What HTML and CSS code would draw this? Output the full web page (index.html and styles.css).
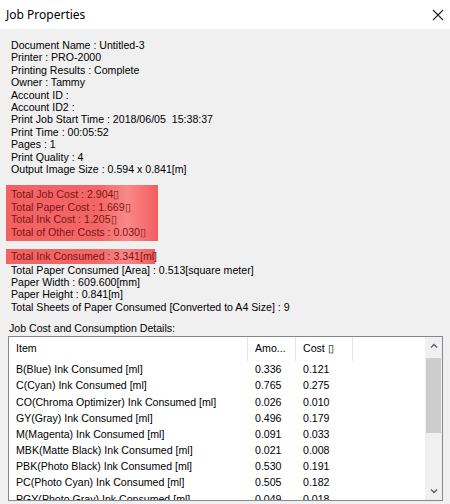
FILE: index.html
```html
<!DOCTYPE html>
<html lang="en">
<head>
    <meta charset="UTF-8">
    <title>Job Properties</title>
    <link rel="stylesheet" href="styles.css">
</head>
<body>
    <div class="window">
        <div class="titlebar">
            <span class="title">Job Properties</span>
            <svg class="close" width="12" height="12" viewBox="0 0 12 12">
                <path d="M1 1 L11 11 M11 1 L1 11" stroke="#222" stroke-width="1.1" fill="none"/>
            </svg>
        </div>

        <div class="content">
            <div class="lines">
                <div>Document Name : Untitled-3</div>
                <div>Printer : PRO-2000</div>
                <div>Printing Results : Complete</div>
                <div>Owner : Tammy</div>
                <div>Account ID :</div>
                <div>Account ID2 :</div>
                <div>Print Job Start Time : 2018/06/05&nbsp;&nbsp;15:38:37</div>
                <div>Print Time : 00:05:52</div>
                <div>Pages : 1</div>
                <div>Print Quality : 4</div>
                <div>Output Image Size : 0.594 x 0.841[m]</div>
            </div>

            <div class="lines marked costs">
                <div>Total Job Cost : 2.904▯</div>
                <div>Total Paper Cost : 1.669▯</div>
                <div>Total Ink Cost : 1.205▯</div>
                <div>Total of Other Costs : 0.030▯</div>
            </div>

            <div class="lines consumed">
                <div class="marked ink">Total Ink Consumed : 3.341[ml]</div>
                <div>Total Paper Consumed [Area] : 0.513[square meter]</div>
                <div>Paper Width : 609.600[mm]</div>
                <div>Paper Height : 0.841[m]</div>
                <div>Total Sheets of Paper Consumed [Converted to A4 Size] : 9</div>
            </div>

            <div class="label">Job Cost and Consumption Details:</div>

            <div class="listview">
                <div class="rows">
                    <div class="row head">
                        <span class="c-item">Item</span>
                        <span class="c-amt">Amo...</span>
                        <span class="c-cost">Cost ▯</span>
                        <span class="c-rest"></span>
                    </div>
                    <div class="row"><span class="c-item">B(Blue) Ink Consumed [ml]</span><span class="c-amt">0.336</span><span class="c-cost">0.121</span></div>
                    <div class="row"><span class="c-item">C(Cyan) Ink Consumed [ml]</span><span class="c-amt">0.765</span><span class="c-cost">0.275</span></div>
                    <div class="row"><span class="c-item">CO(Chroma Optimizer) Ink Consumed [ml]</span><span class="c-amt">0.026</span><span class="c-cost">0.010</span></div>
                    <div class="row"><span class="c-item">GY(Gray) Ink Consumed [ml]</span><span class="c-amt">0.496</span><span class="c-cost">0.179</span></div>
                    <div class="row"><span class="c-item">M(Magenta) Ink Consumed [ml]</span><span class="c-amt">0.091</span><span class="c-cost">0.033</span></div>
                    <div class="row"><span class="c-item">MBK(Matte Black) Ink Consumed [ml]</span><span class="c-amt">0.021</span><span class="c-cost">0.008</span></div>
                    <div class="row"><span class="c-item">PBK(Photo Black) Ink Consumed [ml]</span><span class="c-amt">0.530</span><span class="c-cost">0.191</span></div>
                    <div class="row"><span class="c-item">PC(Photo Cyan) Ink Consumed [ml]</span><span class="c-amt">0.505</span><span class="c-cost">0.182</span></div>
                    <div class="row"><span class="c-item">PGY(Photo Gray) Ink Consumed [ml]</span><span class="c-amt">0.049</span><span class="c-cost">0.018</span></div>
                </div>
                <div class="scrollbar">
                    <svg class="arrow" width="8" height="6" viewBox="0 0 8 6">
                        <path d="M1 4.5 L4 1.5 L7 4.5" stroke="#606060" stroke-width="1.4" fill="none"/>
                    </svg>
                    <div class="thumb"></div>
                    <div class="track"></div>
                    <svg class="arrow" width="8" height="6" viewBox="0 0 8 6">
                        <path d="M1 1.5 L4 4.5 L7 1.5" stroke="#606060" stroke-width="1.4" fill="none"/>
                    </svg>
                </div>
            </div>
        </div>
    </div>
</body>
</html>
```

FILE: styles.css
```css
/* General reset */
* {
    margin: 0;
    padding: 0;
    box-sizing: border-box;
}

body {
    font-family: 'Liberation Sans', Arial, sans-serif;
    font-size: 10.6px;
    color: #000;
    background: #f0f0f0;
    overflow: hidden;
}

.window {
    width: 450px;
    height: 504px;
    display: flex;
    flex-direction: column;
}

/* Title bar */
.titlebar {
    flex-shrink: 0;
    height: 29px;
    background: #fff;
    display: flex;
    align-items: center;
    justify-content: space-between;
    padding: 0 6px 0 6px;
}

.title {
    font-family: 'Noto Sans', 'Liberation Sans', sans-serif;
    font-size: 12px;
}

/* Main content */
.content {
    flex: 1;
    padding: 10px 7px 0 8px;
    display: flex;
    flex-direction: column;
    min-height: 0;
}

.lines {
    line-height: 12.4px;
    padding-left: 3px;
    white-space: nowrap;
}

.marked {
    background: linear-gradient(90deg, #f26262 0%, #f36666 60%, #f98888 80%, #f25e5e 100%);
    color: #7c1515;
}

.costs {
    width: 152px;
    margin: 10px 0 0 -2px;
    padding: 3px 0 3px 5px;
}

.consumed {
    margin-top: 8px;
}

.ink {
    width: 149px;
    margin-left: -5px;
    padding: 1px 0 1px 5px;
}

.label {
    margin-top: 9px;
    padding-left: 1px;
    line-height: 12px;
}

/* List view */
.listview {
    flex-shrink: 0;
    margin-top: 2px;
    height: 165px;
    border: 1px solid #828790;
    background: #fff;
    display: flex;
    overflow: hidden;
}

.rows {
    flex: 1;
    overflow: hidden;
}

.row {
    display: flex;
    height: 16.2px;
    line-height: 16.2px;
    white-space: nowrap;
}

.row span {
    padding-left: 7px;
    overflow: hidden;
}

.row.head {
    height: 24px;
    line-height: 23px;
}

.row.head span {
    border-right: 1px solid #e5e5e5;
}

.row.head .c-rest {
    border-right: none;
}

.c-item {
    width: 239px;
}

.c-amt {
    width: 48px;
}

.c-cost {
    width: 57px;
}

.c-rest {
    flex: 1;
}

/* Scroll bar */
.scrollbar {
    width: 17px;
    background: #f0f0f0;
    display: flex;
    flex-direction: column;
    align-items: center;
}

.arrow {
    flex-shrink: 0;
    margin: 6px 0;
}

.thumb {
    width: 15px;
    height: 75px;
    margin-top: 3px;
    background: #cdcdcd;
}

.track {
    flex: 1;
}
```
